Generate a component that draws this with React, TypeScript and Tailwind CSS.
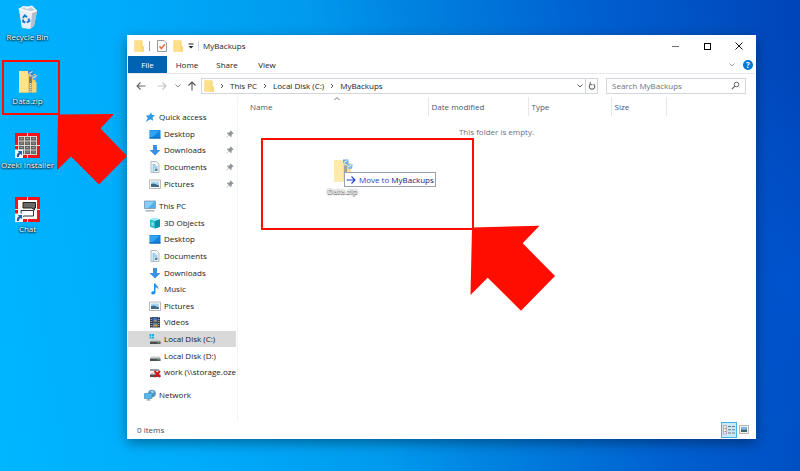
import type { ReactNode } from "react";

function FolderIcon() {
    return (
        <svg width="11" height="12" viewBox="0 0 11 12">
            <path d="M0.5 0.5h8v6h1.500v5H0.5z" fill="#f6cf63" />
            <path d="M0.5 0.5h7v11h-7z" fill="#ffe08a" />
            <path d="M7.5 7h2.500v4.500H6.500z" fill="#f9d976" />
        </svg>
    );
}

function CheckDocIcon() {
    return (
        <svg width="10" height="12" viewBox="0 0 10 12">
            <path d="M0.5 0.5h6.5l2.5 2.5v8.5h-9z" fill="#fbfbfb" stroke="#9a9a9a" />
            <path d="M2.5 6.3l1.9 2.2 3.4-4.2" fill="none" stroke="#ea7045" strokeWidth="1.500" />
        </svg>
    );
}

function ZipIcon() {
    return (
        <svg width="25" height="25" viewBox="0 0 25 25">
            <path d="M4 2h13v3h3.500v17l-2.500 1.500H4z" fill="#f2cc62" />
            <path d="M4 2h9v21.500H4z" fill="#ffe28a" />
            <path d="M17 13h4.500v10.500H17z" fill="#f7d675" />
            <path d="M15.500 6v17.500" stroke="#9a988a" strokeWidth="2.600" />
            <path d="M15.500 6v17.500" stroke="#eceadf" strokeWidth="1.400" strokeDasharray="1 1" />
            <path d="M14.200 8h2.600v6h-2.600z" fill="#77766f" />
            <path d="M13 1.500h5.500V6h-2.200L13 4.500z" fill="#2f86d8" />
            <path d="M17.500 6h5v2.500l-1 2.500h-3l-1-2z" fill="#4b9fe6" />
            <path d="M14 4.500l3.500-2M18 9l3.500-2.500" stroke="#cbe5f9" strokeWidth="1.100" />
        </svg>
    );
}

function RecycleIcon() {
    return (
        <svg width="25" height="25" viewBox="0 0 25 25">
            <path d="M4 4l14-1 4 3-3 15-4 3-8-1z" fill="#dfe6ec" />
            <path d="M17 8l5-2-3 15-4 3z" fill="#b4bfc9" />
            <path d="M4 4l13 3.500-1.500 16L7 22.500z" fill="#e9eef2" />
            <path d="M3.500 4L8 1l5 .5 4-1 5 5-5 2z" fill="#f7f9fa" />
            <path d="M6 4l3-2 3 2 4-2 4 3-4 1.500z" fill="#c7d0d8" />
            <path d="M3.500 4L17 7.500 22 5.500" fill="none" stroke="#fff" strokeWidth="0.800" />
            <path d="M7.800 13l2-2.500 2.200 1.800M13.500 13.500l.8 2.500-2.500 1.500M10.300 17.500l-2-.8-.4-2.200" fill="none" stroke="#1f7ad1" strokeWidth="2" />
        </svg>
    );
}

function ShortcutArrow() {
    return (
        <>
            <path d="M0 16.500h8v8.500H0z" fill="#f4f7fa" />
            <path d="M1.800 24c0-3 .8-4 2.200-4.800L2.800 18H7v4.200l-1.300-1.200C4.300 21.500 4 22.500 4 24z" fill="#2a5fa8" />
        </>
    );
}

function InstallerIcon() {
    return (
        <svg width="25" height="25" viewBox="0 0 25 25">
            <path d="M0 0h25v25H0z" fill="#f5131a" />
            <path d="M12.500 0v25M0 12.500h25" stroke="#ffd9d9" />
            <path d="M3 3h19v19H3z" fill="#d7d3d3" />
            {[4, 8.5, 13, 17.5].map((y) =>
                [4, 10, 16].map((x) => (
                    <g key={`${x}-${y}`}>
                        <rect x={x} y={y} width="5" height="3.5" fill="#666464" />
                        <rect x={x + 1.5} y={y + 1} width="2" height="1" fill="#a7a3a3" />
                    </g>
                )),
            )}
            <ShortcutArrow />
        </svg>
    );
}

function ChatIcon() {
    return (
        <svg width="25" height="25" viewBox="0 0 25 25">
            <path d="M0 0h25v25H0z" fill="#f5131a" />
            <path d="M12.500 0v25M0 12.500h25" stroke="#ffd9d9" />
            <path d="M3 3h19v19H3z" fill="#fff" />
            <path d="M8 5.500h12.500v5.500H19.500v2l-2.500-2H8z" fill="#6a6a6a" stroke="#222" />
            <path d="M6 13.500h12.500v5.500H9L6.500 20z" fill="#fff" stroke="#333" />
            <ShortcutArrow />
        </svg>
    );
}

function StarIcon() {
    return (
        <svg width="12" height="12" viewBox="0 0 12 12">
            <path d="M7 1.200l.8 2.600 3.200.5-2.400 2.100.5 3.400-2.700-1.500L1.500 11l2.300-3.700L2 4.500l3.200-.2z" fill="#2f9ae6" />
        </svg>
    );
}

function DesktopIcon() {
    return (
        <svg width="12" height="12" viewBox="0 0 12 12">
            <path d="M0.500 2h11v8.500h-11z" fill="#0f83dd" />
            <path d="M1 2.500h10L3 9.500H1z" fill="#2ea4f5" />
            <path d="M0.500 9.500h11v1h-11z" fill="#0a5fa8" />
        </svg>
    );
}

function DownloadsIcon() {
    return (
        <svg width="12" height="12" viewBox="0 0 12 12">
            <path d="M4 1h4v5h3.500L6 11.500.5 6H4z" fill="#3c92e2" />
        </svg>
    );
}

function DocumentsIcon() {
    return (
        <svg width="12" height="12" viewBox="0 0 12 12">
            <path d="M2 0.500h5.500L10 3v8.500H2z" fill="#f7fafc" stroke="#9aa7b2" strokeWidth="0.800" />
            <path d="M3.500 4h3M3.500 6h5M3.500 8h2M3.500 10h2" stroke="#4ba3d6" />
            <path d="M6 7.500h2.500V10H6z" fill="#567f9b" />
        </svg>
    );
}

function PicturesIcon() {
    return (
        <svg width="12" height="12" viewBox="0 0 12 12">
            <path d="M0.500 2h11v8.500h-11z" fill="#fafafa" stroke="#a9a9a9" strokeWidth="0.800" />
            <path d="M2 3.500h8v5.500H2z" fill="#a9d5f2" />
            <path d="M2 6l3-.5 5 2V9H2z" fill="#3f6b86" />
        </svg>
    );
}

function ComputerIcon() {
    return (
        <svg width="12" height="12" viewBox="0 0 12 12">
            <path d="M0.500 1h11v7.500h-11z" fill="#4fb1ec" stroke="#7d96a8" strokeWidth="0.800" />
            <path d="M1 1.500h9.500L4 8H1z" fill="#86cdf7" />
            <path d="M2 10h8l1 1.500H1z" fill="#a9b4bc" />
        </svg>
    );
}

function CubeIcon() {
    return (
        <svg width="12" height="12" viewBox="0 0 12 12">
            <path d="M1 2.500L6 .8l5 1.700v7.300L6 11.500 1 9.800z" fill="#2cbfce" />
            <path d="M1 2.500L6 .8l5 1.700L6 4z" fill="#a2ecf2" />
            <path d="M6 4l5-1.500v7.300L6 11.500z" fill="#0a91a5" />
            <path d="M2.500 5l2 .5v3.500l-2-.5z" fill="#8be3eb" />
        </svg>
    );
}

function MusicIcon() {
    return (
        <svg width="12" height="12" viewBox="0 0 12 12">
            <path d="M5 .5h1.500c.3 2 3.500 2.700 2.800 6.300-.4-1.500-1.300-2.300-2.800-2.500v5c0 1.500-1.200 2.200-2.500 2.200S2 10.800 2.300 9.800C2.600 8.600 3.800 8 5 8.400z" fill="#1a8fe3" />
        </svg>
    );
}

function VideosIcon() {
    return (
        <svg width="12" height="12" viewBox="0 0 12 12">
            <path d="M1 1h10v10.500H1z" fill="#35383f" />
            <path d="M3.500 1.500h5v4h-5z" fill="#3f6fc4" />
            <path d="M3.500 6.500h5v4h-5z" fill="#5b78a8" />
            <path d="M6 3.500l2.500 2h-4zM5 9l3.500-1v2.500h-5z" fill="#c79a44" />
            <path d="M2.200 1v10.500M9.800 1v10.500" stroke="#c9ccd2" strokeDasharray="1 1" />
        </svg>
    );
}

function DriveIcon({ kind }: { kind: "system" | "plain" | "offline" }) {
    return (
        <svg width="12" height="12" viewBox="0 0 12 12">
            <path d="M2 6.500h8.500l1 2H1z" fill="#c6c9cb" />
            <path d="M1 8.500h10.500v2.500H1z" fill="#4a4e51" />
            <path d="M8.500 9.300h2v1h-2z" fill="#67c97c" />
            {kind === "system" && <path d="M.5 1h2v2h-2zM3 1h2v2h-2zM.5 3.500h2v2h-2zM3 3.500h2v2h-2z" fill="#18b0ee" />}
            {kind === "offline" && (
                <>
                    <path d="M1 3h9v2H1z" fill="#9c9fa1" />
                    <path d="M5.500 5l5.500 6M11 5l-5.500 6" stroke="#d8151b" strokeWidth="2" />
                </>
            )}
        </svg>
    );
}

function NetworkIcon() {
    return (
        <svg width="12" height="12" viewBox="0 0 12 12">
            <circle cx="8" cy="4.500" r="3.800" fill="#4a93bf" />
            <path d="M6 2.500l2.500-1.200 2 1.700-2.500 1.500z" fill="#9ad6ee" />
            <path d="M.5 4.500l7.500-.5v5.500H.5z" fill="#52b9f0" stroke="#4c8db5" strokeWidth="0.700" />
            <path d="M2.500 11h4M4.500 9.500V11" stroke="#7d97a6" />
        </svg>
    );
}

function PinIcon() {
    return (
        <svg width="8" height="8" viewBox="0 0 8 8">
            <path d="M4.500.3l3.200 3.200-1 .3-1.200 1.300.1 1.700-.7.300L3 5.200.6 7.500.4 7.300 2.700 4.900 1 3.200l.3-.7 1.700.2 1.200-1.300z" fill="#8a959d" />
        </svg>
    );
}

function Chevron({ dir, color }: { dir: "right" | "down" | "up"; color: string }) {
    const paths = {
        right: "M2 1l2 2-2 2",
        down: "M.5 1.500L3 4l2.500-2.500",
        up: "M.5 4L3 1.500 5.500 4",
    };
    return (
        <svg width="6" height="6" viewBox="0 0 6 6">
            <path d={paths[dir]} fill="none" stroke={color} />
        </svg>
    );
}

function Arrow({ dir, color }: { dir: "left" | "right" | "up"; color: string }) {
    const paths = {
        left: "M9.500 5H1M4.500 1.500L1 5l3.500 3.500",
        right: "M.5 5H9M5.500 1.500L9 5 5.500 8.500",
        up: "M5 9.500V1M1.500 4.500L5 1l3.500 3.500",
    };
    return (
        <svg width="10" height="10" viewBox="0 0 10 10">
            <path d={paths[dir]} fill="none" stroke={color} strokeWidth="1.100" />
        </svg>
    );
}

const desktopItems = [
    { label: "Recycle Bin", icon: <RecycleIcon /> },
    { label: "Data.zip", icon: <ZipIcon /> },
    { label: "Ozeki Installer", icon: <InstallerIcon /> },
    { label: "Chat", icon: <ChatIcon /> },
];

type NavItem = { label: string; icon: ReactNode; root?: boolean; pinned?: boolean; active?: boolean };

const navItems: NavItem[] = [
    { label: "Quick access", icon: <StarIcon />, root: true },
    { label: "Desktop", icon: <DesktopIcon />, pinned: true },
    { label: "Downloads", icon: <DownloadsIcon />, pinned: true },
    { label: "Documents", icon: <DocumentsIcon />, pinned: true },
    { label: "Pictures", icon: <PicturesIcon />, pinned: true },
    { label: "This PC", icon: <ComputerIcon />, root: true },
    { label: "3D Objects", icon: <CubeIcon /> },
    { label: "Desktop", icon: <DesktopIcon /> },
    { label: "Documents", icon: <DocumentsIcon /> },
    { label: "Downloads", icon: <DownloadsIcon /> },
    { label: "Music", icon: <MusicIcon /> },
    { label: "Pictures", icon: <PicturesIcon /> },
    { label: "Videos", icon: <VideosIcon /> },
    { label: "Local Disk (C:)", icon: <DriveIcon kind="system" />, active: true },
    { label: "Local Disk (D:)", icon: <DriveIcon kind="plain" /> },
    { label: "work (\\\\storage.oze", icon: <DriveIcon kind="offline" /> },
    { label: "Network", icon: <NetworkIcon />, root: true },
];

function TitleBar() {
    return (
        <header className="flex h-5 items-center pl-1.5">
            <FolderIcon />
            <span className="ml-1 h-2.5 w-px bg-gray-400" />
            <button className="ml-[7px]" aria-label="Properties">
                <CheckDocIcon />
            </button>
            <button className="ml-1.5" aria-label="New folder">
                <FolderIcon />
            </button>
            <button className="ml-1" aria-label="Customize toolbar">
                <svg width="6" height="6" viewBox="0 0 6 6">
                    <path d="M.5 1h5" stroke="#222" />
                    <path d="M.5 3h5L3 5.500z" fill="#222" />
                </svg>
            </button>
            <span className="ml-1 h-2.5 w-px bg-gray-300" />
            <h1 className="ml-1 flex-1">MyBackups</h1>
            <button className="flex w-8 justify-center" aria-label="Minimize">
                <span className="h-px w-[7px] bg-gray-500" />
            </button>
            <button className="flex w-8 justify-center" aria-label="Maximize">
                <span className="size-[7px] border border-black" />
            </button>
            <button className="flex w-8 justify-center" aria-label="Close">
                <svg width="8" height="8" viewBox="0 0 8 8">
                    <path d="M.5.5l7 7M7.500.5l-7 7" stroke="#111" />
                </svg>
            </button>
        </header>
    );
}

function RibbonTabs() {
    return (
        <div className="flex h-[18px] items-stretch border-b border-gray-200 pr-0.5">
            <button className="w-[39px] bg-[#0063b1] text-white">File</button>
            <button className="w-10">Home</button>
            <button className="w-10">Share</button>
            <button className="w-10">View</button>
            <div className="ml-auto flex items-center gap-2">
                <button aria-label="Expand ribbon">
                    <Chevron dir="down" color="#999" />
                </button>
                <button aria-label="Help" className="flex size-2.5 items-center justify-center rounded-full bg-[#0078d7] text-[8px] font-bold text-white">
                    ?
                </button>
            </div>
        </div>
    );
}

function AddressBar() {
    return (
        <div className="flex h-[23px] items-center pr-[9px] pl-2">
            <button aria-label="Back">
                <Arrow dir="left" color="#666" />
            </button>
            <button className="ml-[11px]" aria-label="Forward">
                <Arrow dir="right" color="#c4c4c4" />
            </button>
            <button className="ml-2" aria-label="Recent locations">
                <Chevron dir="down" color="#888" />
            </button>
            <button className="ml-1.5" aria-label="Up">
                <Arrow dir="up" color="#555" />
            </button>
            <nav className="ml-1 flex h-4 flex-1 items-center border border-gray-300 pl-0.5">
                <FolderIcon />
                <div className="ml-1 flex items-center gap-[5px]">
                    <Chevron dir="right" color="#555" />
                    <a href="#pc">This PC</a>
                    <Chevron dir="right" color="#555" />
                    <a href="#c">Local Disk (C:)</a>
                    <Chevron dir="right" color="#555" />
                    <a href="#backups">MyBackups</a>
                </div>
                <button className="mr-0.5 ml-auto" aria-label="Previous locations">
                    <Chevron dir="down" color="#555" />
                </button>
                <button className="flex h-full w-3 items-center justify-center border-l border-gray-300" aria-label="Refresh">
                    <svg width="8" height="8" viewBox="0 0 8 8">
                        <path d="M5.600 2.300a2.700 2.700 0 1 1-3.200 0M2.200.3v2.400h2.300" fill="none" stroke="#666" strokeWidth="1.100" />
                    </svg>
                </button>
            </nav>
            <label className="ml-2 flex h-4 w-[140px] items-center border border-gray-300 px-[5px]">
                <input type="search" aria-label="Search MyBackups" placeholder="Search MyBackups" className="min-w-0 flex-1 outline-none placeholder:text-gray-500" />
                <svg width="9" height="9" viewBox="0 0 9 9">
                    <circle cx="5.500" cy="3.500" r="2.300" fill="none" stroke="#666" />
                    <path d="M3.800 5.200L.8 8.200" stroke="#666" strokeWidth="1.200" />
                </svg>
            </label>
        </div>
    );
}

function Sidebar() {
    return (
        <nav className="flex w-[110px] flex-col border-r border-gray-100 pt-3 pr-px pb-[18px]">
            {navItems.map((item, i) => (
                <a
                    key={i}
                    href="#nav"
                    className={`flex min-h-3 flex-1 items-center gap-[3px] overflow-hidden whitespace-nowrap ${item.root ? "pl-4" : "pl-[21px]"} ${item.root && i > 0 ? "mt-1.5" : ""} ${item.active ? "bg-[#d9d9d9]" : ""}`}
                >
                    <span className="shrink-0">{item.icon}</span>
                    {item.label}
                    {item.pinned && (
                        <span className="mr-0.5 ml-auto">
                            <PinIcon />
                        </span>
                    )}
                </a>
            ))}
        </nav>
    );
}

function FileList() {
    return (
        <main className="flex-1">
            <table className="w-full table-fixed">
                <thead>
                    <tr className="h-[19px] text-left text-[#44597a]">
                        <th className="relative w-[190px] border-r border-gray-200 pl-3 font-normal">
                            Name
                            <span className="absolute -top-px left-24">
                                <Chevron dir="up" color="#777" />
                            </span>
                        </th>
                        <th className="w-[100px] border-r border-gray-200 pl-[3px] font-normal">Date modified</th>
                        <th className="w-[83px] border-r border-gray-200 pl-[3px] font-normal">Type</th>
                        <th className="w-[55px] border-r border-gray-200 pl-[3px] font-normal">Size</th>
                        <th />
                    </tr>
                </thead>
                <tbody>
                    <tr>
                        <td colSpan={5} className="pt-2.5 text-center text-gray-500">
                            This folder is empty.
                        </td>
                    </tr>
                </tbody>
            </table>
        </main>
    );
}

function StatusBar() {
    return (
        <footer className="flex h-[17px] items-center pr-1.5 pl-[9px] text-[#3a4a66]">
            0 items
            <button className="ml-auto flex size-4 items-center justify-center border border-[#3fb5e6] bg-[#c9e8f6]" aria-label="Details view">
                <svg width="12" height="10" viewBox="0 0 12 10">
                    <path d="M.5.500h3v8.500h-3z" fill="#f6e9e6" stroke="#a5a5a5" strokeWidth="0.800" />
                    <path d="M1.500 3.500h1.500M1.500 6.500h1.500" stroke="#b08a80" />
                    <path d="M5 1.500h3M9 1.500h3M5 4.800h3M9 4.800h3M5 8h3M9 8h3" stroke="#6a7b85" />
                </svg>
            </button>
            <button className="ml-0.5" aria-label="Thumbnail view">
                <svg width="10" height="9" viewBox="0 0 10 9">
                    <path d="M.5.500h9v8H.5z" fill="#f2f2f2" stroke="#b5b5b5" />
                    <path d="M2 2h6v5H2z" fill="#79b7ea" />
                    <path d="M2 4.500l3 .5 3-.5V7H2z" fill="#3f6472" />
                </svg>
            </button>
        </footer>
    );
}

export default function App() {
    return (
        <div className="relative flex min-h-screen overflow-hidden bg-[radial-gradient(circle_at_100%_60%,#0058dc80,transparent_25%),linear-gradient(80deg,#00b6ff_0%,#00acfb_22%,#009aee_44%,#0082e0_56%,#0060d0_76%,#0044b8_100%)] font-['Open_Sans','Noto_Sans',sans-serif] text-[8px] leading-3 text-[#1a1a1a]">
            {/* Desktop icons */}
            <div className="flex w-[127px] flex-col pt-[5px]">
                {desktopItems.map((item) => (
                    <button
                        key={item.label}
                        className="flex h-16 w-[55px] flex-col items-center gap-px whitespace-nowrap text-white [text-shadow:0_1px_2px_#000,0_0_2px_#000]"
                    >
                        {item.icon}
                        {item.label}
                    </button>
                ))}
            </div>

            {/* Explorer window */}
            <section className="mt-[35px] mr-11 mb-8 flex flex-1 flex-col border border-white bg-white shadow-[0_4px_12px_#00000060]">
                <TitleBar />
                <RibbonTabs />
                <AddressBar />
                <div className="flex flex-1">
                    <Sidebar />
                    <FileList />
                </div>
                <StatusBar />
            </section>

            {/* Dragged file */}
            <div className="absolute top-[158px] left-[315px] flex w-[55px] flex-col items-center gap-0.5 text-white opacity-70 [text-shadow:0_0_2px_#000,0_1px_1px_#000]">
                <ZipIcon />
                Data.zip
            </div>
            <div className="absolute top-[172px] left-[344px] flex h-[15px] items-center gap-[3px] border border-gray-400 bg-white px-px whitespace-nowrap text-[#1c3fc4]">
                <Arrow dir="right" color="#1c3fc4" />
                <span>
                    Move to <span className="text-[#1a0f7a]">MyBackups</span>
                </span>
            </div>

            {/* Callouts */}
            <div className="absolute top-[60px] left-0.5 h-[55px] w-[58px] border-2 border-[#ff0d00]" />
            <div className="absolute top-[138px] left-[261px] h-[92px] w-[213px] border-2 border-[#ff0d00]" />
            <svg className="absolute top-[114px] left-[57px]" width="71" height="72" viewBox="0 0 71 72">
                <path d="M1 .5L57 0 43.500 14.500 70 42 42 70.500 14 42.500 0 56z" fill="#ff0d00" />
            </svg>
            <svg className="absolute top-[225px] left-[470px]" width="86" height="87" viewBox="0 0 86 87">
                <path d="M2 2.500L69.500.7 52.700 18.300 85 51 51 85.700 17.700 52.700.5 70z" fill="#ff0d00" />
            </svg>
        </div>
    );
}
